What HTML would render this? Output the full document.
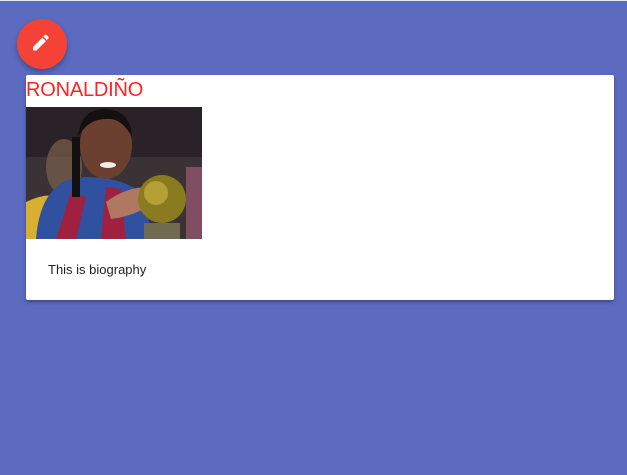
<!DOCTYPE html>
<html><head><style>
body{margin:0;width:627px;height:475px;background:#5c6bc0;font-family:"Liberation Sans",sans-serif;position:relative;overflow:hidden}
.top{position:absolute;left:0;top:0;width:627px;height:1px;background:#e8e8f0}
.fab{position:absolute;left:17px;top:19px;width:50px;height:50px;border-radius:50%;background:#f44336;box-shadow:0 3px 6px rgba(0,0,0,.3)}
.card{position:absolute;left:26px;top:75px;width:588px;height:225px;background:#fff;border-radius:2px;box-shadow:0 2px 3px rgba(0,0,0,.35)}
h1{position:absolute;left:0;top:4px;margin:0;font-weight:normal;font-size:20px;color:#f22;letter-spacing:-0.2px}
.img{position:absolute;left:0;top:32px;width:176px;height:132px;overflow:hidden;background:#2b2628}
.bio{position:absolute;left:22px;top:187px;font-size:13px;color:#222}
</style></head><body>
<div class="top"></div>
<div class="fab"><svg width="50" height="50" viewBox="0 0 50 50"><path d="M34 21.5l-2-2-1.6-1.6c-.4-.4-1-.4-1.4 0l-1.6 1.6 3.5 3.5 1.6-1.6c.4-.4.4-1 0-1.4zM26.4 20.6L17 30v3.5h3.5l9.4-9.4z" fill="#fff" transform="translate(-1,-2)"/></svg></div>
<div class="card">
<h1>RONALDIÑO</h1>
<div class="img"><svg width="176" height="132" viewBox="0 0 176 132">
<rect width="176" height="132" fill="#3a3234"/>
<rect x="0" y="0" width="176" height="50" fill="#2a2226"/>
<ellipse cx="38" cy="60" rx="18" ry="28" fill="#7a6050" opacity=".7"/>
<path d="M0 95 Q20 85 35 90 L30 132 L0 132Z" fill="#d8b030"/>
<path d="M10 132 Q15 70 60 70 Q100 70 120 90 L125 132Z" fill="#3050a0"/>
<path d="M30 132 L45 85 L60 90 L50 132Z M75 132 L80 80 L95 82 L100 132Z" fill="#a02040"/>
<ellipse cx="80" cy="38" rx="26" ry="34" fill="#6b4030"/>
<path d="M52 30 Q55 0 82 2 Q105 5 106 30 Q95 10 80 12 Q62 12 52 30Z" fill="#151010"/>
<rect x="46" y="30" width="8" height="60" fill="#151010"/>
<ellipse cx="82" cy="58" rx="8" ry="3" fill="#eee"/>
<path d="M80 95 Q100 80 122 80 L125 98 Q105 110 85 112Z" fill="#b07860"/>
<circle cx="136" cy="92" r="24" fill="#8a7a20"/>
<circle cx="130" cy="86" r="12" fill="#c8b040" opacity=".7"/>
<rect x="118" y="116" width="36" height="16" fill="#706a50"/>
<rect x="160" y="60" width="16" height="72" fill="#b06080" opacity=".6"/>
</svg></div>
<div class="bio">This is biography</div>
</div>
</body></html>
